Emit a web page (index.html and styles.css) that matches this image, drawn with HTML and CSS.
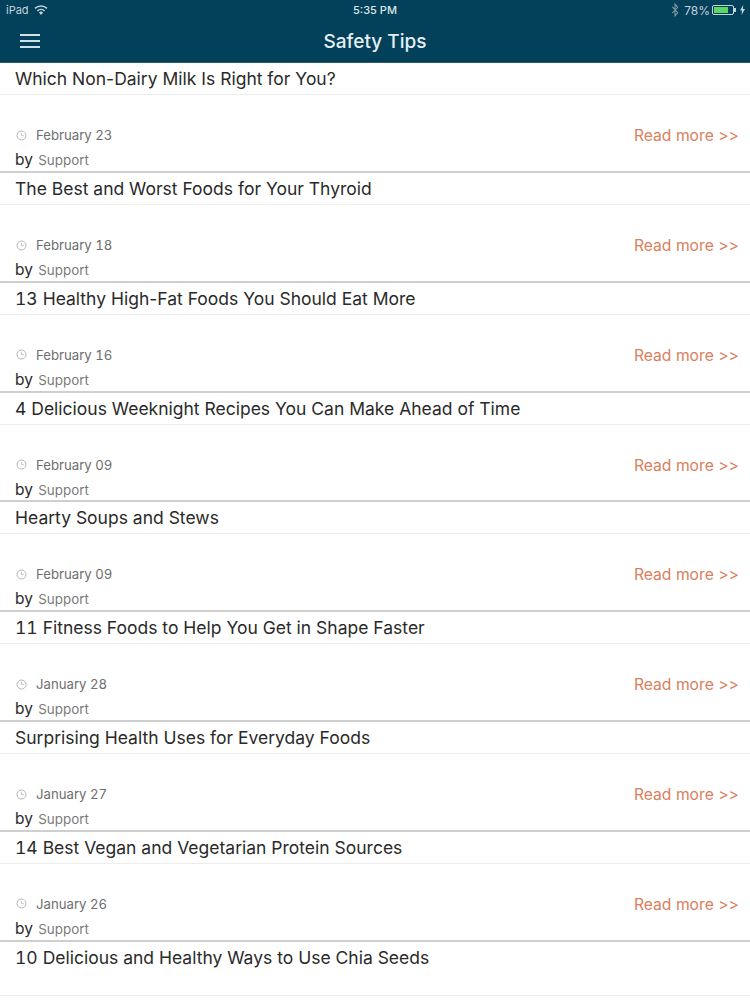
FILE: index.html
```html
<!DOCTYPE html>
<html lang="en">
<head>
    <meta charset="UTF-8">
    <title>Safety Tips</title>
    <link rel="stylesheet" href="styles.css">
</head>
<body>
    <header class="app-header">
        <div class="status-bar">
            <div class="status-left">
                <span>iPad</span>
                <svg class="wifi" width="14" height="10" viewBox="0 0 14 10"><path d="M7 10 4.9 7.6a3 3 0 0 1 4.2 0z" fill="#c3d3da"/><path d="M3.4 5.9a5.2 5.2 0 0 1 7.2 0M1 3.4a8.6 8.6 0 0 1 12 0" fill="none" stroke="#c3d3da" stroke-width="1.5"/></svg>
            </div>
            <div class="status-time">5:35 PM</div>
            <div class="status-right">
                <svg class="bluetooth" width="8" height="14" viewBox="0 0 7 13"><path d="M1 3.5 6 9l-2.5 3V1L6 4 1 9.5" fill="none" stroke="#7f9aa6" stroke-width="1"/></svg>
                <span class="battery-level">78%</span>
                <span class="battery"><span class="battery-fill"></span></span>
                <svg class="bolt" width="5" height="10" viewBox="0 0 5 10"><path d="M3.2 0 0 5.6h2L1.5 10 5 4H3z" fill="#c3d3da"/></svg>
            </div>
        </div>
        <div class="nav-bar">
            <div class="menu-icon"><span></span><span></span><span></span></div>
            <h1>Safety Tips</h1>
        </div>
    </header>

    <div class="post-list">
        <div class="post-title">Which Non-Dairy Milk Is Right for You?</div>

        <div class="post-meta">
            <div class="meta-left">
                <div class="meta-date"><svg class="clock" width="11" height="11" viewBox="0 0 11 11"><circle cx="5.5" cy="5.5" r="4.5" fill="none" stroke="#b5b5b5"/><path d="M5.5 2.8v2.9h2.3" fill="none" stroke="#b5b5b5" stroke-width=".8"/></svg>February 23</div>
                <div class="meta-by">by <span>Support</span></div>
            </div>
            <a class="read-more">Read more &gt;&gt;</a>
        </div>
        <div class="post-title">The Best and Worst Foods for Your Thyroid</div>

        <div class="post-meta">
            <div class="meta-left">
                <div class="meta-date"><svg class="clock" width="11" height="11" viewBox="0 0 11 11"><circle cx="5.5" cy="5.5" r="4.5" fill="none" stroke="#b5b5b5"/><path d="M5.5 2.8v2.9h2.3" fill="none" stroke="#b5b5b5" stroke-width=".8"/></svg>February 18</div>
                <div class="meta-by">by <span>Support</span></div>
            </div>
            <a class="read-more">Read more &gt;&gt;</a>
        </div>
        <div class="post-title"><span class="num">13</span> Healthy High-Fat Foods You Should Eat More</div>

        <div class="post-meta">
            <div class="meta-left">
                <div class="meta-date"><svg class="clock" width="11" height="11" viewBox="0 0 11 11"><circle cx="5.5" cy="5.5" r="4.5" fill="none" stroke="#b5b5b5"/><path d="M5.5 2.8v2.9h2.3" fill="none" stroke="#b5b5b5" stroke-width=".8"/></svg>February 16</div>
                <div class="meta-by">by <span>Support</span></div>
            </div>
            <a class="read-more">Read more &gt;&gt;</a>
        </div>
        <div class="post-title"><span class="num">4</span> Delicious Weeknight Recipes You Can Make Ahead of Time</div>

        <div class="post-meta">
            <div class="meta-left">
                <div class="meta-date"><svg class="clock" width="11" height="11" viewBox="0 0 11 11"><circle cx="5.5" cy="5.5" r="4.5" fill="none" stroke="#b5b5b5"/><path d="M5.5 2.8v2.9h2.3" fill="none" stroke="#b5b5b5" stroke-width=".8"/></svg>February 09</div>
                <div class="meta-by">by <span>Support</span></div>
            </div>
            <a class="read-more">Read more &gt;&gt;</a>
        </div>
        <div class="post-title">Hearty Soups and Stews</div>

        <div class="post-meta">
            <div class="meta-left">
                <div class="meta-date"><svg class="clock" width="11" height="11" viewBox="0 0 11 11"><circle cx="5.5" cy="5.5" r="4.5" fill="none" stroke="#b5b5b5"/><path d="M5.5 2.8v2.9h2.3" fill="none" stroke="#b5b5b5" stroke-width=".8"/></svg>February 09</div>
                <div class="meta-by">by <span>Support</span></div>
            </div>
            <a class="read-more">Read more &gt;&gt;</a>
        </div>
        <div class="post-title"><span class="num">11</span> Fitness Foods to Help You Get in Shape Faster</div>

        <div class="post-meta">
            <div class="meta-left">
                <div class="meta-date"><svg class="clock" width="11" height="11" viewBox="0 0 11 11"><circle cx="5.5" cy="5.5" r="4.5" fill="none" stroke="#b5b5b5"/><path d="M5.5 2.8v2.9h2.3" fill="none" stroke="#b5b5b5" stroke-width=".8"/></svg>January 28</div>
                <div class="meta-by">by <span>Support</span></div>
            </div>
            <a class="read-more">Read more &gt;&gt;</a>
        </div>
        <div class="post-title">Surprising Health Uses for Everyday Foods</div>

        <div class="post-meta">
            <div class="meta-left">
                <div class="meta-date"><svg class="clock" width="11" height="11" viewBox="0 0 11 11"><circle cx="5.5" cy="5.5" r="4.5" fill="none" stroke="#b5b5b5"/><path d="M5.5 2.8v2.9h2.3" fill="none" stroke="#b5b5b5" stroke-width=".8"/></svg>January 27</div>
                <div class="meta-by">by <span>Support</span></div>
            </div>
            <a class="read-more">Read more &gt;&gt;</a>
        </div>
        <div class="post-title"><span class="num">14</span> Best Vegan and Vegetarian Protein Sources</div>

        <div class="post-meta">
            <div class="meta-left">
                <div class="meta-date"><svg class="clock" width="11" height="11" viewBox="0 0 11 11"><circle cx="5.5" cy="5.5" r="4.5" fill="none" stroke="#b5b5b5"/><path d="M5.5 2.8v2.9h2.3" fill="none" stroke="#b5b5b5" stroke-width=".8"/></svg>January 26</div>
                <div class="meta-by">by <span>Support</span></div>
            </div>
            <a class="read-more">Read more &gt;&gt;</a>
        </div>
        <div class="post-title"><span class="num">10</span> Delicious and Healthy Ways to Use Chia Seeds</div>
    </div>
</body>
</html>
```

FILE: styles.css
```css
html, body {
    height: 1000px;
    overflow: hidden;
}

body {
    margin: 0;
    font-family: Inter, "Liberation Sans", sans-serif;
    background-color: #fff;
    color: #2a2a2a;
}

.app-header {
    height: 63.3px;
    background-color: #03405a;
    color: #fff;
    box-sizing: border-box;
    border-bottom: 1px solid #2d5b6e;
}

.status-bar {
    height: 20px;
    position: relative;
    display: flex;
    justify-content: space-between;
    align-items: center;
    padding: 0 5px 0 6px;
    font-size: 11px;
    color: #c3d3da;
}

.status-left, .status-right {
    display: flex;
    align-items: center;
    gap: 5px;
}

.status-right {
    gap: 3px;
}

.battery-level {
    font-size: 12px;
    margin-right: -1px;
}

.bluetooth {
    margin-right: 2px;
}

.bolt {
    margin-left: 3px;
}

.status-time {
    position: absolute;
    left: 0;
    right: 0;
    text-align: center;
    font-weight: 500;
    color: #dbe5e9;
}

.battery {
    position: relative;
    width: 22px;
    height: 10px;
    border: 1px solid #c3d3da;
    border-radius: 2px;
    padding: 1px;
    box-sizing: border-box;
}

.battery::after {
    content: "";
    position: absolute;
    right: -3px;
    top: 2px;
    width: 2px;
    height: 4px;
    background-color: #c3d3da;
}

.battery-fill {
    display: block;
    width: 78%;
    height: 100%;
    background-color: #5fd65f;
}

.nav-bar {
    height: 42px;
    position: relative;
    display: flex;
    align-items: center;
    justify-content: center;
}

.nav-bar h1 {
    margin: 0;
    font-size: 19px;
    font-weight: 500;
    color: #e6eef1;
}

.menu-icon {
    position: absolute;
    left: 20px;
    top: 14px;
    width: 20px;
    display: flex;
    flex-direction: column;
    gap: 4px;
}

.menu-icon span {
    display: block;
    height: 2px;
    background-color: #cfe0e6;
}

.post-title {
    height: 32px;
    line-height: 32px;
    padding-left: 15px;
    font-size: 17.5px;
    color: #2a2a2a;
    border-bottom: 1px solid #ececec;
    box-sizing: border-box;
}

.post-title:last-child {
    height: 54px;
}

.num {
    font-variant-numeric: tabular-nums;
}

.post-meta {
    height: 77.8px;
    box-sizing: border-box;
    display: flex;
    justify-content: space-between;
    padding: 30px 11px 0 16px;
    border-bottom: 2px solid #cfcfcf;
}

.meta-date {
    display: flex;
    align-items: center;
    height: 20px;
    font-size: 13.2px;
    font-variant-numeric: tabular-nums;
    color: #6e6e6e;
}

.clock {
    margin-right: 9px;
}

.meta-by {
    margin-top: 4px;
    margin-left: -1px;
    font-size: 15.5px;
    line-height: 22px;
    color: #2a2a2a;
}

.meta-by span {
    margin-left: 1px;
    font-size: 13.4px;
    color: #7a7a7a;
}

.read-more {
    margin-top: 1px;
    font-size: 15.7px;
    line-height: 20px;
    color: #d9805c;
}
```
